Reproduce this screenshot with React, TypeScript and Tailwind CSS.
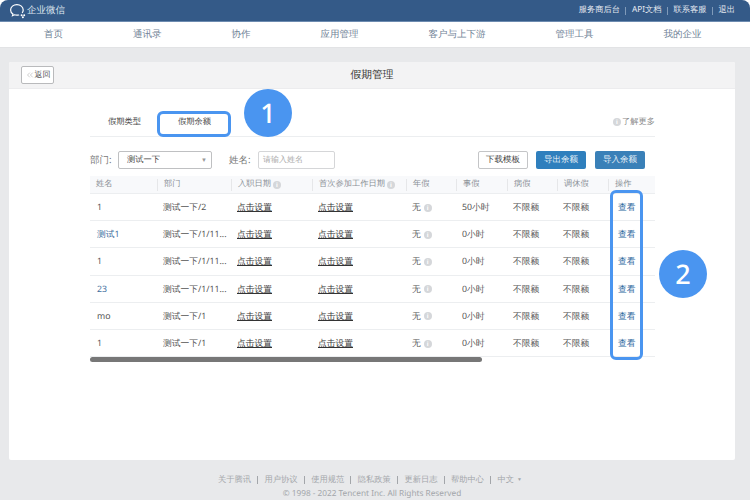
import { ChevronsLeft } from "lucide-react";

const NAV = ["首页", "通讯录", "协作", "应用管理", "客户与上下游", "管理工具", "我的企业"];
const TOP_LINKS = ["服务商后台", "API文档", "联系客服", "退出"];
const FOOT = ["关于腾讯", "用户协议", "使用规范", "隐私政策", "更新日志", "帮助中心"];

const COLS = "grid grid-cols-[67px_74px_81px_94px_50px_51px_50px_51px_47px]";

const HEAD = [
  { label: "姓名" },
  { label: "部门" },
  { label: "入职日期", info: true },
  { label: "首次参加工作日期", info: true },
  { label: "年假" },
  { label: "事假" },
  { label: "病假" },
  { label: "调休假" },
  { label: "操作" },
];

const ROWS = [
  { name: "1", dept: "测试一下/2", hours: "50小时" },
  { name: "测试1", dept: "测试一下/1/11...", hours: "0小时", blue: true },
  { name: "1", dept: "测试一下/1/11...", hours: "0小时" },
  { name: "23", dept: "测试一下/1/11...", hours: "0小时", blue: true },
  { name: "mo", dept: "测试一下/1", hours: "0小时" },
  { name: "1", dept: "测试一下/1", hours: "0小时" },
];

function Info() {
  return (
    <span className="inline-flex h-[8px] w-[8px] shrink-0 items-center justify-center rounded-full bg-[#d5d7da] text-[6px] font-bold leading-none text-white">
      i
    </span>
  );
}

function Logo() {
  return (
    <svg width="17" height="16" viewBox="0 0 17 16" fill="none" stroke="#ffffff" strokeWidth="1.2">
      <path d="M13.4 9.5C13.9 8.7 14.2 7.8 14.2 6.9 14.2 3.9 11.4 1.6 7.9 1.6S1.6 3.9 1.6 6.9c0 1.7.9 3.2 2.3 4.2l-.4 1.6 1.9-.9c.8.3 1.6.4 2.5.4.6 0 1.2-.1 1.8-.2" strokeLinecap="round" />
      <circle cx="12.6" cy="12.2" r="1" fill="#ffffff" stroke="none" />
      <circle cx="15.2" cy="12.2" r="1" fill="#ffffff" stroke="none" />
      <circle cx="13.9" cy="14.2" r="1" fill="#ffffff" stroke="none" />
    </svg>
  );
}

export default function App() {
  return (
    <div className="relative flex h-[500px] w-[750px] flex-col overflow-hidden bg-[#e8e9eb] font-['Noto_Sans_CJK_SC','Liberation_Sans',sans-serif] text-[9px] text-[#555] antialiased [text-rendering:geometricPrecision]">
      <div className="flex h-[22px] items-center justify-between rounded-t-[8px] border-b border-[#6d8bb0] bg-[#345a88] pl-[9px] pr-[15px] shadow-[0_-8px_0_#fff]">
        <div className="flex items-center gap-[1px] text-[9.5px] text-[#dfe6ef]">
          <Logo />
          <span>企业微信</span>
        </div>
        <div className="flex items-center text-[8.25px] text-[#e4e9f0]">
          {TOP_LINKS.map((l, i) => (
            <span key={l} className="flex items-center">
              {i > 0 && <span className="mx-[5.5px] h-[8px] w-px bg-[#7f9ab9]" />}
              {l}
            </span>
          ))}
        </div>
      </div>

      <div className="flex h-[26px] items-center gap-[70px] border-b border-[#e2e3e5] bg-white pl-[44px] text-[9.5px] text-[#6f8296]">
        {NAV.map((n) => (
          <span key={n}>{n}</span>
        ))}
      </div>

      <div className="mx-[9px] mt-[14px] flex h-[398px] w-[726px] flex-col rounded-[2px] bg-white">
        <div className="relative flex h-[27px] items-center justify-center rounded-t-[2px] border-b border-[#ececee] bg-[#f3f3f4] text-[10.75px] text-[#333]">
          <div className="absolute left-[12px] top-[4px] flex h-[18px] w-[33px] items-center justify-center rounded-[2px] border border-[#b9babc] bg-white text-[8px] text-[#555]">
            <ChevronsLeft size={10} strokeWidth={1} className="text-[#888]" />
            返回
          </div>
          假期管理
        </div>

        <div className="ml-[81px] mt-[21px] w-[565px]">
          <div className="flex h-[27px] items-center justify-between border-b border-[#eceef0] pb-[2px] text-[8.25px] text-[#444]">
            <div className="flex items-center">
              <span className="w-[69px] pl-[18px]">假期类型</span>
              <span className="w-[72px] pl-[19px]">假期余额</span>
            </div>
            <div className="flex items-center gap-[1px] text-[#888]">
              <Info />
              了解更多
            </div>
          </div>

          <div className="mt-[14px] flex h-[18px] items-center text-[9.5px] text-[#777]">
            <span className="w-[28px]">部门:</span>
            <div className="flex h-[18px] w-[94px] items-center justify-between rounded-[2px] border border-[#bfc0c2] pl-[8px] pr-[4px] text-[8.25px] text-[#444]">
              测试一下
              <span className="text-[6px] text-[#999]">▼</span>
            </div>
            <span className="ml-[17px] w-[29px]">姓名:</span>
            <div className="flex h-[18px] w-[77px] items-center rounded-[2px] border border-[#d5d6d8] px-[4px] text-[8px] text-[#aaa]">
              请输入姓名
            </div>
            <div className="ml-auto mr-[10px] flex text-[8.5px]">
              <span className="mr-[8px] flex h-[18px] w-[50px] items-center justify-center rounded-[2px] border border-[#c4c5c7] bg-white text-[#444]">
                下载模板
              </span>
              <span className="mr-[9px] flex h-[18px] w-[50px] items-center justify-center rounded-[2px] bg-[#2f7fbd] text-[#e8f1f8]">
                导出余额
              </span>
              <span className="flex h-[18px] w-[50px] items-center justify-center rounded-[2px] bg-[#3a80b8] text-[#e8f1f8]">
                导入余额
              </span>
            </div>
          </div>

          <div className="mt-[7px]">
            <div className={`${COLS} h-[18px] items-center border-b border-[#eceef0] bg-[#f8f9fb] text-[8.25px] text-[#8a8f96]`}>
              {HEAD.map((h, i) => (
                <div key={h.label} className={`flex h-[12px] items-center gap-[2px] overflow-hidden whitespace-nowrap pl-[6px] ${i > 0 ? "border-l border-[#e6e7e9]" : ""}`}>
                  {h.label}
                  {h.info && <Info />}
                </div>
              ))}
            </div>
            {ROWS.map((r, i) => (
              <div key={i} className={`${COLS} h-[27.2px] items-center border-b border-[#eceef0] pt-[1px] text-[8.75px] text-[#555]`}>
                <span className={`pl-[7px] ${r.blue ? "text-[#3f6f9e]" : ""}`}>{r.name}</span>
                <span className="overflow-hidden whitespace-nowrap pl-[6px]">{r.dept}</span>
                <span className="pl-[6px] text-[#333] underline">点击设置</span>
                <span className="pl-[6px] text-[#333] underline">点击设置</span>
                <span className="flex items-center gap-[3px] pl-[6px]">
                  无
                  <Info />
                </span>
                <span className="pl-[6px]">{r.hours}</span>
                <span className="pl-[6px]">不限额</span>
                <span className="pl-[6px]">不限额</span>
                <span className="pl-[10px] text-[#2f6a9e]">查看</span>
              </div>
            ))}
            <div className="h-[5px] w-[392px] rounded-full bg-[#777]" />
          </div>
        </div>
      </div>

      <div className="ml-[218px] mt-[14px] flex text-[8.25px] leading-[12px] text-[#a3a6aa]">
        {FOOT.map((f) => (
          <span key={f} className="flex items-center">
            {f}
            <span className="mx-[6.3px] h-[8px] w-px bg-[#a3a6aa]" />
          </span>
        ))}
        <span className="flex items-center gap-[3px]">
          中文<span className="text-[5px]">▼</span>
        </span>
      </div>
      <div className="mt-[2px] pr-[6px] text-center text-[8.25px] leading-[12px] text-[#a3a6aa]">© 1998 - 2022 Tencent Inc. All Rights Reserved</div>

      <div className="absolute left-[157px] top-[111px] h-[26px] w-[74px] rounded-[6px] border-[3px] border-[#4a95f0]" />
      <div className="absolute left-[610px] top-[190px] h-[170px] w-[33px] rounded-[6px] border-[3px] border-[#4a95f0]" />
      <div className="absolute left-[244px] top-[89px] flex h-[48px] w-[48px] items-center justify-center rounded-full bg-[#4a95f0] font-['Inter',sans-serif] text-[27px] font-medium text-white">
        1
      </div>
      <div className="absolute left-[659px] top-[250px] flex h-[48px] w-[48px] items-center justify-center rounded-full bg-[#4a95f0] font-['Inter',sans-serif] text-[27px] font-medium text-white">
        2
      </div>
    </div>
  );
}
